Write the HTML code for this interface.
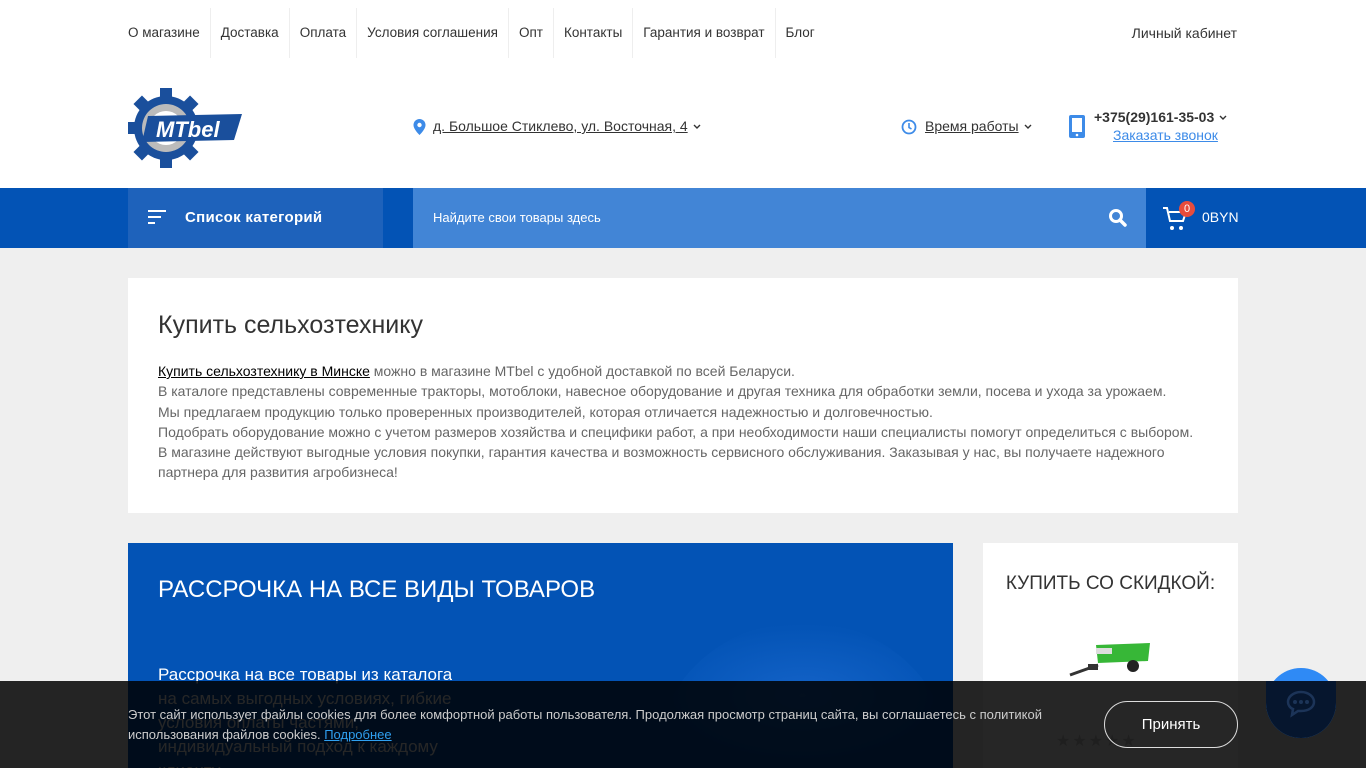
<!DOCTYPE html>
<html><head><meta charset="utf-8"><style>
*{box-sizing:border-box;margin:0;padding:0}
html,body{overflow:hidden}
body{width:1366px;height:768px;overflow:hidden;background:#efefef;font-family:"Liberation Sans","DejaVu Sans",sans-serif;color:#333;position:relative}
.top{height:68px;background:#fff;box-shadow:0 2px 6px rgba(0,0,0,.05);position:relative}
.nav{position:absolute;left:128px;top:8px;display:flex;height:50px;align-items:center;font-size:13.5px;color:#333}
.nav span{padding:0 10px;border-left:1px solid #eee;line-height:50px}
.nav span:first-child{padding-left:0;border:none}
.lk{position:absolute;right:129px;top:25px;font-size:14px}
.hdr{height:120px;background:#fff;position:relative}
.bar{height:60px;background:#0353b5;position:relative}
.cat{position:absolute;left:128px;top:0;width:255px;height:60px;background:#1e62bb;color:#fff;font-weight:bold;font-size:15px;letter-spacing:.3px}
.search{position:absolute;left:413px;top:0;width:733px;height:60px;background:#4285d6;color:#fff;font-size:13px}
.card{position:absolute;left:128px;top:278px;width:1110px;height:235px;background:#fff}
.card h1{font-weight:normal;font-size:25px;color:#333;position:absolute;left:30px;top:33px}
.card p{position:absolute;left:30px;top:83px;font-size:14px;line-height:20.3px;color:#666;width:1050px}
.banner{position:absolute;left:128px;top:543px;width:825px;height:225px;background:#0353b5;color:#fff;overflow:hidden}
.side{position:absolute;left:983px;top:543px;width:255px;height:225px;background:#fff;overflow:hidden}
.cookie{position:absolute;left:0;top:681px;width:1366px;height:87px;background:rgba(0,0,0,.85);color:#ccc;font-size:13px}
.chev{display:inline-block;margin-left:5px;vertical-align:middle}
</style></head><body>
<div class="top">
<div class="nav"><span>О магазине</span><span>Доставка</span><span>Оплата</span><span>Условия соглашения</span><span>Опт</span><span>Контакты</span><span>Гарантия и возврат</span><span>Блог</span></div>
<div class="lk">Личный кабинет</div>
</div>
<div class="hdr">
<svg style="position:absolute;left:128px;top:20px" width="116" height="80" viewBox="0 0 116 80">
<g transform="translate(38,40)"><circle r="32" fill="#1a4f9c"/>
<g fill="#1a4f9c"><rect x="-6" y="-40" width="12" height="80"/><rect x="-40" y="-6" width="80" height="12"/><rect x="-6" y="-40" width="12" height="80" transform="rotate(45)"/><rect x="-6" y="-40" width="12" height="80" transform="rotate(-45)"/></g>
<circle r="24" fill="#bbb"/><circle r="17" fill="#fff"/></g>
<polygon points="20,28 114,26 106,52 14,54" fill="#1a4f9c"/>
<text x="28" y="49" font-family="Liberation Sans" font-weight="bold" font-style="italic" font-size="22" fill="#fff">MTbel</text>
</svg>
<svg style="position:absolute;left:413px;top:51px" width="13" height="16" viewBox="0 0 12 16"><path d="M6 0a6 6 0 0 0-6 6c0 4.5 6 10 6 10s6-5.5 6-10a6 6 0 0 0-6-6z" fill="#3d8be8"/><circle cx="6" cy="6" r="2.2" fill="#fff"/></svg>
<div style="position:absolute;left:433px;top:50px;font-size:14px;white-space:nowrap"><span style="text-decoration:underline">д. Большое Стиклево, ул. Восточная, 4</span><svg class="chev" width="8" height="6"><path d="M1 1l3 3 3-3" fill="none" stroke="#333" stroke-width="1.4"/></svg></div>
<svg style="position:absolute;left:901px;top:51px" width="16" height="16" viewBox="0 0 16 16"><circle cx="8" cy="8" r="6.5" fill="none" stroke="#3d8be8" stroke-width="1.8"/><path d="M8 4v4.5l2.5 1.5" fill="none" stroke="#3d8be8" stroke-width="1.6"/></svg>
<div style="position:absolute;left:925px;top:50px;font-size:14px;white-space:nowrap"><span style="text-decoration:underline">Время работы</span><svg class="chev" width="8" height="6"><path d="M1 1l3 3 3-3" fill="none" stroke="#333" stroke-width="1.4"/></svg></div>
<svg style="position:absolute;left:1069px;top:47px" width="16" height="23" viewBox="0 0 16 23"><rect x="0" y="0" width="16" height="23" rx="2" fill="#3d8be8"/><rect x="3" y="3" width="10" height="14" fill="#fff"/><circle cx="8" cy="20" r="1.3" fill="#fff"/></svg>
<div style="position:absolute;left:1094px;top:41px;font-size:14px;font-weight:bold;white-space:nowrap">+375(29)161-35-03<svg class="chev" width="8" height="6"><path d="M1 1l3 3 3-3" fill="none" stroke="#333" stroke-width="1.4"/></svg></div>
<div style="position:absolute;left:1113px;top:59px;font-size:14px;color:#3d8be8;text-decoration:underline">Заказать звонок</div>
</div>
<div class="bar">
<div class="cat"><svg style="position:absolute;left:20px;top:22px" width="18" height="15"><rect y="0" width="18" height="2" fill="#fff"/><rect y="6" width="13" height="2" fill="#fff"/><rect y="12" width="7" height="2" fill="#fff"/></svg><span style="position:absolute;left:57px;top:21px">Список категорий</span></div>
<div class="search"><span style="position:absolute;left:20px;top:22px">Найдите свои товары здесь</span>
<svg style="position:absolute;left:695px;top:20px" width="20" height="20" viewBox="0 0 20 20"><circle cx="8" cy="8" r="5.5" fill="none" stroke="#fff" stroke-width="3"/><path d="M12 12l5 5" stroke="#fff" stroke-width="3.5" stroke-linecap="round"/></svg></div>
<svg style="position:absolute;left:1162px;top:17px" width="28" height="28" viewBox="0 0 28 28"><path d="M1 3h4l3 13h13l3-9H7" fill="none" stroke="#fff" stroke-width="2"/><circle cx="10" cy="23" r="2" fill="#fff"/><circle cx="19" cy="23" r="2" fill="#fff"/></svg>
<div style="position:absolute;left:1179px;top:13px;width:16px;height:16px;border-radius:50%;background:#e74c3c;color:#fff;font-size:11px;text-align:center;line-height:16px">0</div>
<div style="position:absolute;left:1202px;top:21px;color:#fff;font-size:14px">0BYN</div>
</div>
<div class="card"><h1>Купить сельхозтехнику</h1>
<p><span style="color:#000;text-decoration:underline">Купить сельхозтехнику в Минске</span> можно в магазине MTbel с удобной доставкой по всей Беларуси.<br>В каталоге представлены современные тракторы, мотоблоки, навесное оборудование и другая техника для обработки земли, посева и ухода за урожаем.<br>Мы предлагаем продукцию только проверенных производителей, которая отличается надежностью и долговечностью.<br>Подобрать оборудование можно с учетом размеров хозяйства и специфики работ, а при необходимости наши специалисты помогут определиться с выбором.<br>В магазине действуют выгодные условия покупки, гарантия качества и возможность сервисного обслуживания. Заказывая у нас, вы получаете надежного партнера для развития агробизнеса!</p></div>
<div class="banner">
<div style="position:absolute;left:525px;top:80px;width:300px;height:145px;border-radius:150px 150px 0 0;background:radial-gradient(#1463c8,#0353b5 70%)"></div>
<div style="position:absolute;left:30px;top:33px;font-size:24px">РАССРОЧКА НА ВСЕ ВИДЫ ТОВАРОВ</div>
<div style="position:absolute;left:30px;top:120px;font-size:17px;line-height:24px;height:105px;overflow:hidden">Рассрочка на все товары из каталога<br>на самых выгодных условиях, гибкие<br>условия оплаты частями,<br>индивидуальный подход к каждому<br>клиенту</div>
</div>
<div class="side">
<div style="position:absolute;left:0;width:255px;top:30px;text-align:center;font-size:19px;color:#333">КУПИТЬ СО СКИДКОЙ:</div>
<svg style="position:absolute;left:85px;top:90px" width="90" height="45" viewBox="0 0 90 45"><polygon points="28,12 82,10 80,28 30,30" fill="#37b737"/><rect x="28" y="15" width="16" height="6" fill="#ddd"/><circle cx="65" cy="33" r="6" fill="#222"/><path d="M2 42L30 32" stroke="#333" stroke-width="3"/><rect x="20" y="31" width="10" height="6" fill="#333"/></svg>
<div style="position:absolute;left:73px;top:188px;color:#ccc;font-size:16px;letter-spacing:2px">★★★★★</div>
</div>
<div class="cookie">
<div style="position:absolute;left:128px;top:24px;width:960px;line-height:20px">Этот сайт использует файлы cookies для более комфортной работы пользователя. Продолжая просмотр страниц сайта, вы соглашаетесь с политикой использования файлов cookies. <span style="color:#2fa0f0;text-decoration:underline">Подробнее</span></div>
<div style="position:absolute;left:1104px;top:20px;width:134px;height:47px;border:1px solid #ddd;border-radius:24px;color:#fff;font-size:15px;text-align:center;line-height:45px">Принять</div>
</div>
<div style="position:absolute;left:1266px;top:668px;width:70px;height:70px;border-radius:50%;background:#2f8af5"></div>
<div style="position:absolute;left:1266px;top:681px;width:70px;height:57px;border-radius:0 0 35px 35px;background:#06162e"></div>
<svg style="position:absolute;left:1286px;top:690px" width="30" height="28" viewBox="0 0 30 28"><path d="M15 2C7 2 2 7 2 12c0 3 2 6 5 7l-1 6 6-4h3c8 0 13-4 13-9S23 2 15 2z" fill="none" stroke="#1c3458" stroke-width="2.5"/><circle cx="9" cy="12" r="2" fill="#1c3458"/><circle cx="15" cy="12" r="2" fill="#1c3458"/><circle cx="21" cy="12" r="2" fill="#1c3458"/></svg>
</body></html>
